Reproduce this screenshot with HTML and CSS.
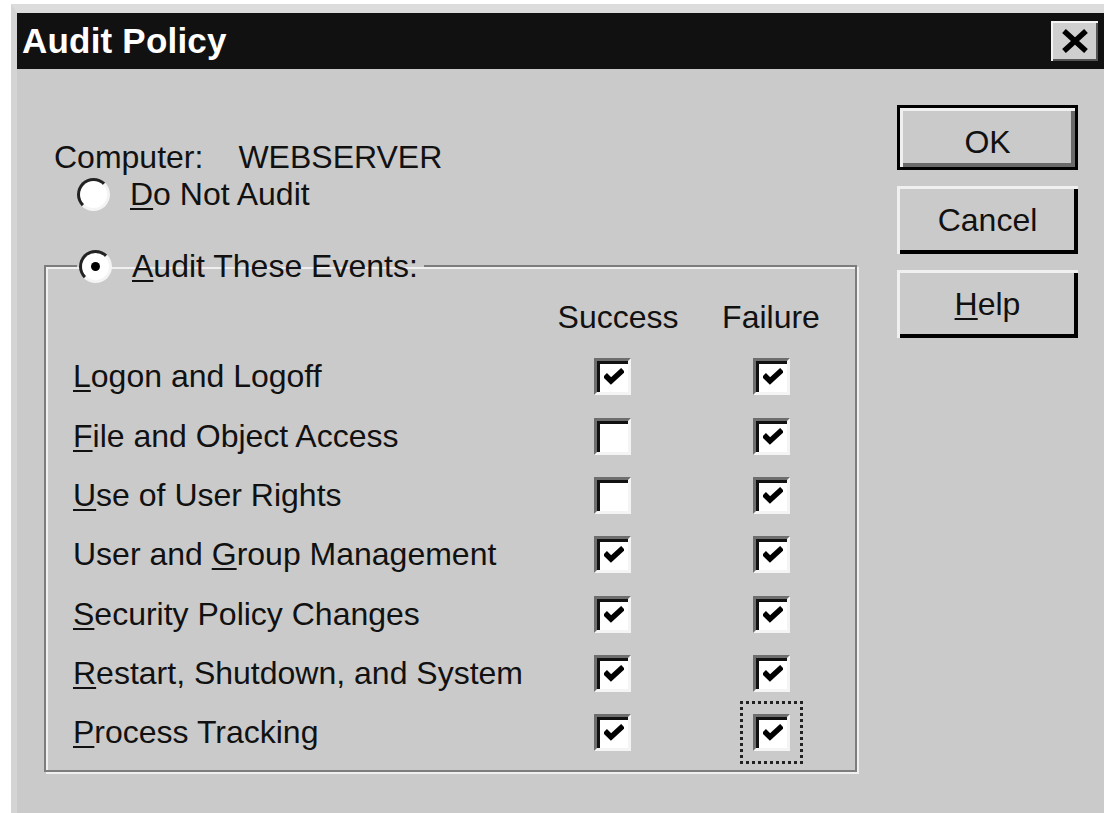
FILE: index.html
```html
<!DOCTYPE html>
<html>
<head>
<meta charset="utf-8">
<link rel="stylesheet" href="styles.css">
</head>
<body>
<div class="dialog">
  <div class="titlebar">
    <span class="title">Audit Policy</span>
    <button class="close" aria-label="Close">
      <svg width="28" height="24" viewBox="0 0 28 24"><path d="M3 2 L25 22 M25 2 L3 22" stroke="#000" stroke-width="5.5"/></svg>
    </button>
  </div>
  <div class="body">
    <div class="main">
      <div class="computer"><span>Computer:</span><span class="name">WEBSERVER</span></div>
      <label class="radio-row"><span class="radio"></span><span><u>D</u>o Not Audit</span></label>
      <fieldset class="group">
        <legend><label class="radio-row legend-row"><span class="radio checked"></span><span><u>A</u>udit These Events:</span></label></legend>
        <div class="grid">
          <span></span><span class="head success">Success</span><span class="head">Failure</span>
          <span class="lbl"><u>L</u>ogon and Logoff</span><span class="cb on"></span><span class="cb on"></span>
          <span class="lbl"><u>F</u>ile and Object Access</span><span class="cb"></span><span class="cb on"></span>
          <span class="lbl"><u>U</u>se of User Rights</span><span class="cb"></span><span class="cb on"></span>
          <span class="lbl">User and <u>G</u>roup Management</span><span class="cb on"></span><span class="cb on"></span>
          <span class="lbl"><u>S</u>ecurity Policy Changes</span><span class="cb on"></span><span class="cb on"></span>
          <span class="lbl"><u>R</u>estart, Shutdown, and System</span><span class="cb on"></span><span class="cb on"></span>
          <span class="lbl"><u>P</u>rocess Tracking</span><span class="cb on"></span><span class="cb on focus"></span>
        </div>
      </fieldset>
    </div>
    <div class="buttons">
      <button class="btn default">OK</button>
      <button class="btn">Cancel</button>
      <button class="btn"><u>H</u>elp</button>
    </div>
  </div>
</div>
</body>
</html>
```
FILE: styles.css
```css
html, body { margin: 0; padding: 0; background: #fff; }
body { width: 1104px; height: 813px; overflow: hidden; font-family: "Liberation Sans", Arial, sans-serif; }

/* window frame */
.dialog { margin: 4px 0 0 11px; height: 809px; background: #cacaca; border-top: 9px solid #dcdcdc; border-left: 6px solid #d4d4d4; box-sizing: border-box; }
.titlebar { height: 56px; background: #111; display: flex; align-items: center; justify-content: space-between; padding: 0 6px 0 5px; }
.title { color: #fff; font-weight: bold; font-size: 35px; letter-spacing: 0.2px; }
.close { width: 47px; height: 40px; background: #cfcfcf; border: 0; box-shadow: inset 2px 2px #f4f4f4, inset -2px -2px #555; display: flex; align-items: center; justify-content: center; padding: 0; }

.body { display: flex; font-size: 32px; color: #111; }
u { text-decoration-thickness: 2px; text-underline-offset: 3px; }

.main { width: 840px; padding: 76px 0 0 27px; box-sizing: border-box; }
.computer { display: flex; gap: 35px; height: 24px; align-items: center; padding-left: 10px; }

/* radio buttons */
.radio-row { display: flex; align-items: center; gap: 20px; height: 50px; padding-left: 33px; }
.radio { width: 33px; height: 33px; border-radius: 50%; background: #fff; box-sizing: border-box; flex: none;
  border: 3px solid; border-color: #222 #f4f4f4 #f4f4f4 #222; position: relative; }
.radio.checked::after { content: ""; position: absolute; left: 9px; top: 9px; width: 9px; height: 9px; border-radius: 50%; background: #000; }

/* group box */
.group { margin: 25px 0 0 0; padding: 0 0 8px 27px; width: 813px; box-sizing: border-box;
  border: 2px solid #7d7d7d; box-shadow: 2px 2px #f0f0f0, inset 2px 2px #f0f0f0; }
.group legend { padding: 0 6px 0 2px; margin-left: 4px; }
.legend-row { padding-left: 0; height: 44px; }

.grid { display: grid; grid-template-columns: 464px 150px 168px; grid-auto-rows: 59.3px; align-items: center; }
.head { justify-self: center; }
.head.success { margin-left: 12px; }

/* check boxes */
.cb { justify-self: center; width: 37px; height: 37px; box-sizing: border-box; background: #fff; border: 3px solid; border-color: #6e6e6e #f4f4f4 #f4f4f4 #6e6e6e; box-shadow: inset 3px 3px #111; position: relative; }
.cb.on::after { content: ""; position: absolute; left: 7px; top: 7px; width: 20px; height: 17px;
  background: url("data:image/svg+xml,%3Csvg xmlns='http://www.w3.org/2000/svg' viewBox='0 0 20 17'%3E%3Cpath d='M1 7 L7 13 L19 2' fill='none' stroke='%23000' stroke-width='5.5'/%3E%3C/svg%3E") no-repeat; }
.cb.focus { outline: 3px dotted #222; outline-offset: 10px; }

/* command buttons */
.buttons { display: flex; flex-direction: column; gap: 16px; padding: 36px 0 0 40px; }
.btn { width: 181px; height: 68px; font: 32px "Liberation Sans", Arial, sans-serif; background: #cacaca; color: #111; border: 0; padding: 0;
  box-shadow: inset 3px 3px #f0f0f0, inset -4px -4px #000; }
.btn.default { height: 65px; padding-top: 10px; box-shadow: inset 0 0 0 3px #000, inset 6px 6px #f0f0f0, inset -7px -7px #6a6a6a; }
```
